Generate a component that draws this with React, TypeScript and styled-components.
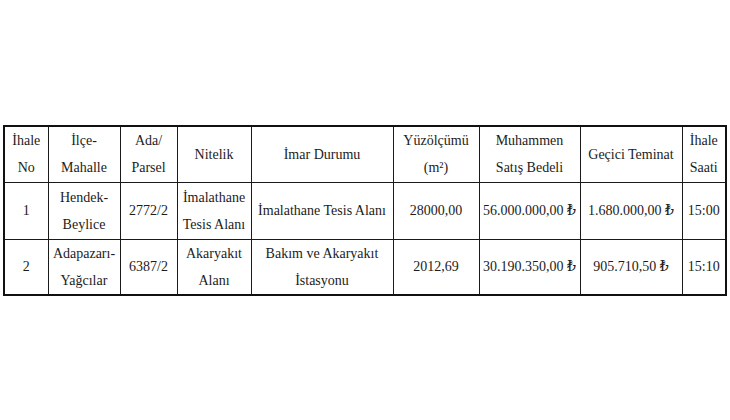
import styled, { createGlobalStyle } from "styled-components";

const GlobalStyle = createGlobalStyle`
  html, body {
    margin: 0;
    padding: 0;
    background: #ffffff;
  }
`;

const COLUMNS = [44, 72, 57, 74, 142, 86, 101, 102, 44];

type Row = {
  no: string;
  district: string[];
  parcel: string;
  kind: string[];
  zoning: string[];
  area: string;
  price: string;
  deposit: string;
  time: string;
};

const ROWS: Row[] = [
  {
    no: "1",
    district: ["Hendek-", "Beylice"],
    parcel: "2772/2",
    kind: ["İmalathane", "Tesis Alanı"],
    zoning: ["İmalathane Tesis Alanı"],
    area: "28000,00",
    price: "56.000.000,00 ₺",
    deposit: "1.680.000,00 ₺",
    time: "15:00",
  },
  {
    no: "2",
    district: ["Adapazarı-", "Yağcılar"],
    parcel: "6387/2",
    kind: ["Akaryakıt", "Alanı"],
    zoning: ["Bakım ve Akaryakıt", "İstasyonu"],
    area: "2012,69",
    price: "30.190.350,00 ₺",
    deposit: "905.710,50 ₺",
    time: "15:10",
  },
];

function Lines({ items }: { items: string[] }) {
  return (
    <>
      {items.map((line, i) => (
        <Line key={i}>{line}</Line>
      ))}
    </>
  );
}

export default function App() {
  return (
    <Page>
      <GlobalStyle />
      <Table>
        <colgroup>
          {COLUMNS.map((w, i) => (
            <col key={i} style={{ width: w }} />
          ))}
        </colgroup>
        <thead>
          <Tr $height={56}>
            <Th><Lines items={["İhale", "No"]} /></Th>
            <Th><Lines items={["İlçe-", "Mahalle"]} /></Th>
            <Th><Lines items={["Ada/", "Parsel"]} /></Th>
            <Th>Nitelik</Th>
            <Th>İmar Durumu</Th>
            <Th><Lines items={["Yüzölçümü", "(m²)"]} /></Th>
            <Th><Lines items={["Muhammen", "Satış Bedeli"]} /></Th>
            <Th>Geçici Teminat</Th>
            <Th><Lines items={["İhale", "Saati"]} /></Th>
          </Tr>
        </thead>
        <tbody>
          {ROWS.map((row, i) => (
            <Tr key={row.no} $height={i === 0 ? 57 : 55}>
              <Td>{row.no}</Td>
              <Td><Lines items={row.district} /></Td>
              <Td>{row.parcel}</Td>
              <Td><Lines items={row.kind} /></Td>
              <Td><Lines items={row.zoning} /></Td>
              <Td>{row.area}</Td>
              <Td>{row.price}</Td>
              <Td>{row.deposit}</Td>
              <Td>{row.time}</Td>
            </Tr>
          ))}
        </tbody>
      </Table>
    </Page>
  );
}

const Page = styled.div`
  padding: 125px 0 0 3px;
`;

const Table = styled.table`
  width: 724px;
  table-layout: fixed;
  border-collapse: collapse;
  border: 2px solid #111111;
  font-family: "Liberation Serif", "DejaVu Serif", "Times New Roman", serif;
  font-size: 14px;
  color: #1c1c1c;
`;

const Tr = styled.tr<{ $height: number }>`
  height: ${(p) => p.$height}px;
`;

const Th = styled.th`
  border: 1px solid #1a1a1a;
  padding: 0 1px;
  font-weight: normal;
  text-align: center;
  vertical-align: middle;
  white-space: nowrap;
  line-height: 27px;
`;

const Td = styled.td`
  border: 1px solid #1a1a1a;
  padding: 0 1px;
  text-align: center;
  vertical-align: middle;
  white-space: nowrap;
  line-height: 27px;
`;

const Line = styled.div`
  display: block;
`;
